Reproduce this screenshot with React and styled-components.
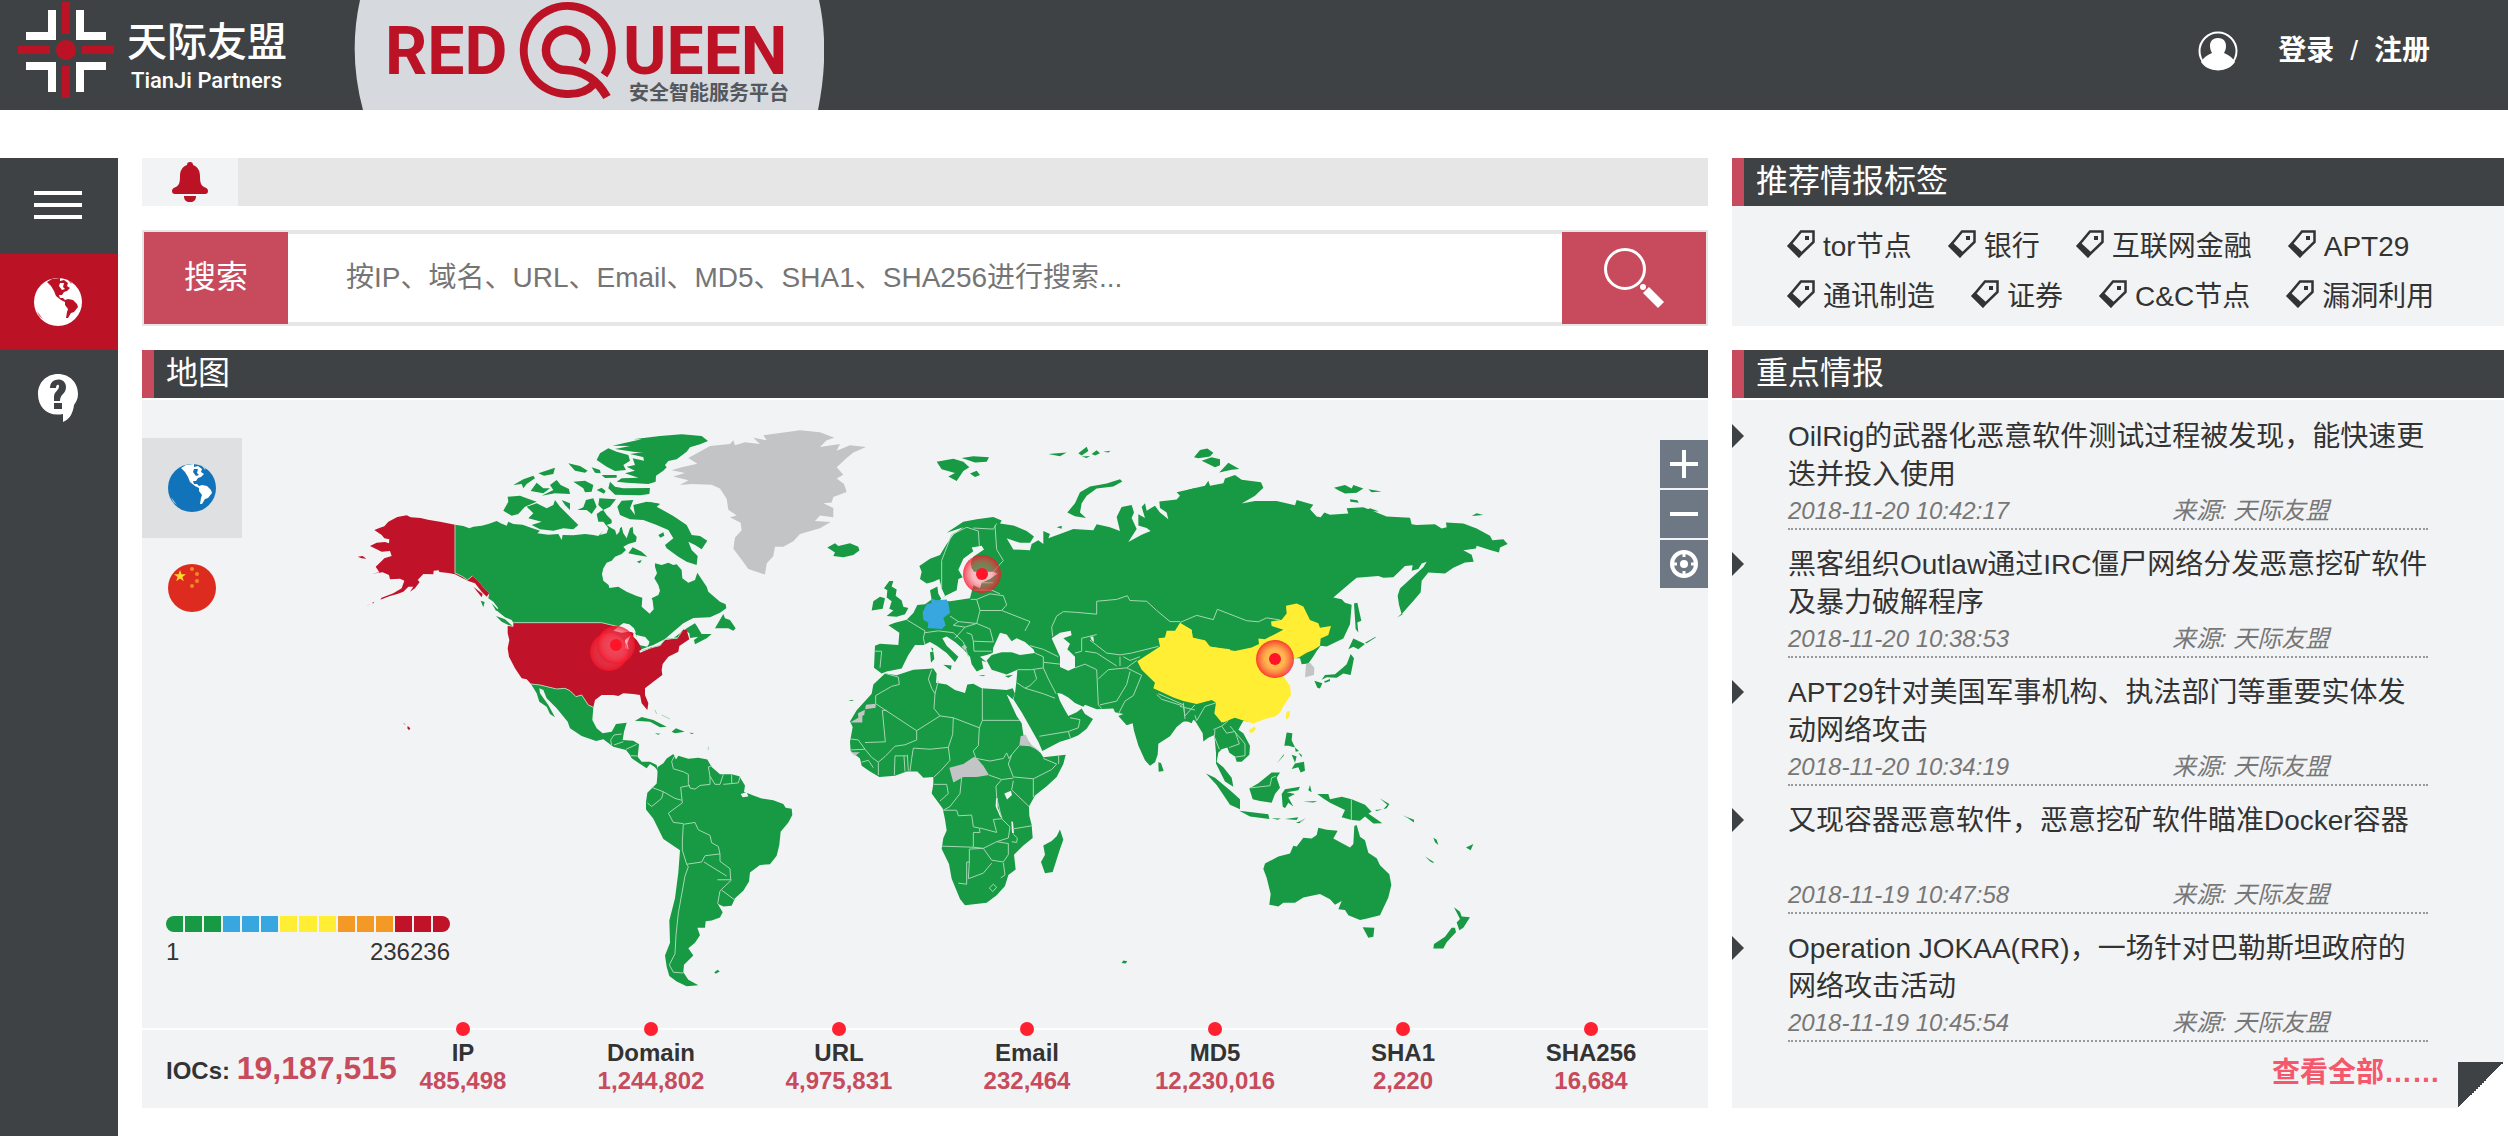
import React from "react";
import styled, { createGlobalStyle } from "styled-components";

const c = {
  dark: "#3f4244",
  red: "#bc1226",
  rose: "#c74b5c",
  panel: "#f2f3f5",
  line: "#e6e6e6",
  green: "#179a43",
  yellow: "#ffee33",
  blue: "#38a7e0",
  orange: "#f29a25",
  grey: "#c3c4c6",
  text: "#333",
  muted: "#777"
};

const GlobalStyle = createGlobalStyle`
  * {
    box-sizing: border-box;
  }
  body {
    margin: 0;
    background: white;
    color: ${c.text};
    font-family: "Liberation Sans", "Noto Sans CJK SC", sans-serif;
    font-size: 28px;
  }
  a {
    color: inherit;
    text-decoration: none;
  }
  button {
    border: 0;
    padding: 0;
    cursor: pointer;
    font: inherit;
  }
`;

const Page = styled.div`
  display: flex;
  flex-direction: column;
  min-height: 100vh;
`;

/* Header */

const StyledHeader = styled.header`
  display: flex;
  align-items: center;
  justify-content: space-between;
  height: 110px;
  padding-right: 78px;
  background-color: ${c.dark};
  color: white;
`;

const Logos = styled.div`
  display: flex;
  height: 110px;
`;

const UserLinks = styled.nav`
  display: flex;
  align-items: center;
  gap: 16px;
  margin-bottom: 8px;
  line-height: 40px;
  a {
    font-weight: bold;
  }
  svg {
    display: block;
    margin-right: 24px;
  }
`;

const CompanyLogo = () => (
  <svg width="354" height="110" role="img" aria-label="天际友盟">
    <g fill="#fff">
      <path d="M48 10h8v30H26v-8h22zM84 10h-8v30h30v-8H84zM48 92h8V62H26v8h22zM84 92h-8V62h30v8H84z" />
    </g>
    <g fill={c.red}>
      <path d="M62 2h8v32h-8zM62 66h8v32h-8zM18 46h32v8H18zM82 46h32v8H82z" />
      <circle cx="66" cy="50" r="10" />
    </g>
    <g fill="#fff">
      <text x="127" y="56" fontSize="40" fontWeight="500" fontFamily="'Noto Sans CJK SC', sans-serif">
        天际友盟
      </text>
      <text x="131" y="88" fontSize="22" fontWeight="500" fontFamily="Roboto, sans-serif">
        TianJi Partners
      </text>
    </g>
  </svg>
);

const ProductLogo = () => (
  <svg width="470" height="110" viewBox="354 0 470 110" role="img" aria-label="RedQueen">
    <path d="M360 0Q348 54 363 110H818Q830 50 819 0z" fill="#d6d9de" />
    <g fill="none" stroke={c.red} strokeWidth="8">
      <path d="M604 75A44 44 0 1 0 566 94Q584 95 594 84" />
      <path d="M582 62A20 20 0 1 0 566 70Q592 71 607 97" strokeWidth="8.5" />
    </g>
    <g fill={c.red} fontFamily="Roboto, sans-serif" fontWeight="700" fontSize="66">
      <text x="385" y="74">
        RED
      </text>
      <text x="623" y="74">
        UEEN
      </text>
    </g>
    <text
      x="629"
      y="100"
      fill="#54585c"
      fontSize="20"
      fontWeight="bold"
      fontFamily="'Noto Sans CJK SC', sans-serif"
    >
      安全智能服务平台
    </text>
  </svg>
);

const Avatar = () => (
  <svg width="40" height="40" viewBox="0 0 40 40" aria-hidden="true">
    <circle cx="20" cy="20" r="18.5" fill="none" stroke="#fff" strokeWidth="2" />
    <path
      d="M20 7c6 0 8 4 8 8 0 3-1 5-2 7 5 2 9 5 11 9-4 6-10 8-17 8S7 37 3 31c2-4 6-7 11-9-1-2-2-4-2-7 0-4 2-8 8-8z"
      fill="#fff"
    />
  </svg>
);

const Header = () => (
  <StyledHeader>
    <Logos>
      <CompanyLogo />
      <ProductLogo />
    </Logos>
    <UserLinks>
      <Avatar />
      <a href="#login">登录</a>
      <span>/</span>
      <a href="#register">注册</a>
    </UserLinks>
  </StyledHeader>
);

/* Sidebar */

const Body = styled.div`
  display: flex;
  flex: 1;
  margin-top: 48px;
`;

const StyledSidebar = styled.nav`
  flex: 0 0 118px;
  background-color: ${c.dark};
`;

const SidebarLink = styled.a`
  display: flex;
  align-items: center;
  justify-content: center;
  height: 96px;
  padding-right: 2px;
  background-color: ${props => (props.$active ? c.red : "transparent")};
`;

const Globe = ({ ocean, land }) => (
  <svg width="48" height="48" viewBox="0 0 48 48" aria-hidden="true">
    <circle cx="24" cy="24" r="24" fill={ocean} />
    <path
      fill={land}
      d="M13 4L18 1 26 0 26 3 30 2 34 5 33 8 36 10 33 13 30 14 28 17 25 17 26 20 29 20 31 22 34 21 39 22 43 26 44 29 40 34 37 35 34 40 32 40 33 34 34 31 31 27 31 24 27 22 22 18 20 13 17 8z"
    />
    <path fill={ocean} d="M26 5l4 0-1 4 2 2-3 1-3-4z" />
    <path fill={land} d="M3 33l3 4 3 4-4-3zM34 2l4 2-1 2z" opacity=".6" />
  </svg>
);

const Sidebar = () => (
  <StyledSidebar>
    <SidebarLink href="#menu" aria-label="菜单">
      <svg width="48" height="48" viewBox="0 0 48 48" fill="#fff">
        <path d="M0 9h48v4H0zM0 21h48v4H0zM0 33h48v4H0z" />
      </svg>
    </SidebarLink>
    <SidebarLink href="#map" aria-label="地图" $active>
      <Globe ocean="#fff" land={c.red} />
    </SidebarLink>
    <SidebarLink href="#help" aria-label="帮助">
      <svg width="42" height="48" viewBox="0 0 42 48">
        <path d="M21 0c12 0 20 9 20 20 0 5-2 8-4 11-1 8-4 14-11 17v-8C11 43 1 34 1 20 1 9 9 0 21 0z" fill="#fff" />
        <path d="M17 27v-4c0-6 5-6 5-11 0-2-3-2-3 2h-6c0-11 16-11 16-1 0 7-6 7-6 14zM17 29h8v6h-8z" fill={c.dark} />
      </svg>
    </SidebarLink>
  </StyledSidebar>
);

/* Columns and panels */

const Main = styled.main`
  display: flex;
  flex: 1;
  align-items: flex-start;
  gap: 24px;
  padding: 0 4px 28px 24px;
`;

const Column = styled.div`
  display: flex;
  flex-direction: column;
  flex: ${props => props.$grow} 1 0;
  gap: 24px;
  min-width: 0;
`;

const PanelTitle = styled.h2`
  height: 48px;
  margin: 0;
  padding-left: 12px;
  border-left: 12px solid ${c.rose};
  background-color: ${c.dark};
  color: white;
  font-size: 32px;
  font-weight: normal;
  line-height: 46px;
`;

const Notice = styled.div`
  height: 48px;
  background-color: ${c.line};
`;

const NoticeIcon = styled.div`
  display: flex;
  align-items: center;
  justify-content: center;
  width: 96px;
  height: 48px;
  background-color: ${c.panel};
`;

const SearchForm = styled.form`
  display: flex;
  height: 96px;
  border: 2px solid ${c.line};
`;

const SearchLabel = styled.label`
  width: 144px;
  background-color: ${c.rose};
  color: white;
  font-size: 32px;
  line-height: 90px;
  text-align: center;
`;

const SearchInput = styled.input`
  flex: 1;
  min-width: 0;
  padding: 0 58px;
  border: 2px solid ${c.line};
  border-width: 2px 0;
  outline: none;
  color: ${c.text};
  font: inherit;
  &::placeholder {
    color: #757575;
    opacity: 1;
  }
`;

const SearchButton = styled.button`
  display: flex;
  align-items: center;
  justify-content: center;
  width: 144px;
  background-color: ${c.rose};
`;

const Search = () => (
  <SearchForm>
    <SearchLabel htmlFor="keyword">搜索</SearchLabel>
    <SearchInput id="keyword" placeholder="按IP、域名、URL、Email、MD5、SHA1、SHA256进行搜索..." />
    <SearchButton type="button" aria-label="搜索">
      <svg width="60" height="60" viewBox="0 0 60 60">
        <circle cx="21" cy="21" r="19.5" fill="none" stroke="#fff" strokeWidth="3" />
        <circle cx="39" cy="39" r="3" fill="#fff" />
        <path d="M39 45l6-6 15 15-6 6z" fill="#fff" />
      </svg>
    </SearchButton>
  </SearchForm>
);

/* Map */

const MapStage = styled.div`
  position: relative;
  margin-top: 2px;
  background-color: ${c.panel};
  > svg {
    display: block;
    width: 100%;
    height: auto;
  }
`;

const RegionTabs = styled.div`
  position: absolute;
  top: 38px;
  left: 0;
`;

const RegionTab = styled.button`
  display: flex;
  align-items: center;
  justify-content: center;
  width: 100px;
  height: 100px;
  background-color: ${props => (props.$active ? "#dfe0e2" : "transparent")};
`;

const ZoomTools = styled.div`
  position: absolute;
  top: 40px;
  right: 0;
  display: flex;
  flex-direction: column;
  gap: 2px;
`;

const ZoomButton = styled.button`
  display: flex;
  align-items: center;
  justify-content: center;
  width: 48px;
  height: 48px;
  background-color: #6e7884;
`;

const Legend = styled.div`
  position: absolute;
  bottom: 62px;
  left: 24px;
  width: 284px;
  font-size: 24px;
`;

const LegendBar = styled.div`
  display: flex;
  gap: 2px;
  height: 16px;
  margin-bottom: 6px;
  overflow: hidden;
  border-radius: 8px;
`;

const LegendCell = styled.span`
  flex: 1;
  background-color: ${props => props.$color};
`;

const LegendRange = styled.div`
  display: flex;
  justify-content: space-between;
  line-height: 28px;
`;

const LAND = {
  northAmerica: {
    origin: "translate(340 410) scale(.33333)",
    green: [
      "M345 344L370 348 388 355 400 350 425 347 445 342 470 333 482 340 500 347 505 335 520 342 548 344 575 354 600 362 592 370 625 374 655 372 665 390 668 375 700 376 735 372 760 375 775 378 790 362 780 375 800 370 805 355 790 335 775 335 770 312 783 303 790 300 800 315 815 330 815 340 800 345 815 355 825 360 830 375 838 365 840 355 845 350 850 370 860 385 870 355 878 350 880 370 890 380 888 395 865 402 850 410 858 420 845 432 825 440 815 452 800 458 790 475 786 493 790 512 806 525 808 534 835 530 860 545 890 558 907 563 905 590 929 611 941 598 938 572 935 565 955 555 960 542 955 525 943 505 951 490 945 470 945 460 965 465 985 458 1000 465 1010 463 1025 480 1027 505 1045 518 1065 510 1072 488 1085 508 1100 530 1105 545 1140 575 1157 583 1159 595 1140 608 1110 622 1060 624 1030 640 1000 665 975 687 940 705 898 720 900 700 925 705 928 695 915 680 890 680 885 668 875 655 865 645 850 640 835 650 785 638 520 638 515 630 495 622 468 600 475 595 460 575 445 565 448 550 432 535 412 510 397 498 382 510 368 500 345 489Z",
      "M1125 655L1150 612 1155 625 1170 630 1187 655 1180 662 1165 655 1145 655Z",
      "M975 687L1000 685 1040 655 1065 640 1072 650 1085 672 1115 672 1100 685 1065 703 1062 690 1075 680 1050 684 1048 670 1030 658 1015 682Z",
      "M468 618L495 628 518 648 505 645 485 635ZM422 572L434 576 430 592ZM455 580L475 600 468 602Z",
      "M818 107L850 100 905 88 880 88 960 78 1025 73 1085 78 1104 93 1080 103 1050 112 1040 125 1010 148 985 153 975 165 980 172 970 182 948 197 947 215 925 222 860 218 830 215 845 205 895 203 855 190 885 182 860 170 885 165 878 145 912 152 910 140 925 130 880 125 825 117 870 108Z",
      "M780 130L805 115 830 125 865 135 870 152 850 165 858 180 825 183 800 170 770 150ZM870 132L930 124 960 128 912 142Z",
      "M810 215L825 230 850 235 930 234 928 252 900 256 825 254 805 235Z",
      "M755 172L780 180 782 190 765 188ZM785 195L830 195 830 203 795 204ZM685 160L720 168 743 182 735 188 705 182Z",
      "M520 225L550 208 580 197 585 205 560 222 550 235 545 222ZM595 190L645 173 640 192 612 197ZM572 243L590 218 610 235 630 235 610 250Z",
      "M630 225L650 210 662 225 687 237 690 252 645 250 605 257 640 240ZM700 215L735 212 760 225 755 245 735 247 730 235ZM770 240L785 233 797 243 792 251Z",
      "M490 302L505 275 503 260 540 257 560 265 590 275 555 290 535 312 515 317Z",
      "M560 290L590 280 620 295 640 285 645 270 660 290 690 320 715 345 700 358 670 355 640 362 600 358 575 345 605 335 565 325 580 310ZM665 270L690 280 690 300 675 285Z",
      "M712 300L730 292 738 270 760 265 770 290 755 312 740 300ZM778 265L828 268 810 290 790 300 775 285Z",
      "M832 290L845 272 880 270 870 295 885 315 880 285 920 275 960 283 950 290 1000 318 1040 345 1055 375 1080 378 1102 392 1085 418 1065 405 1045 395 1055 420 1073 438 1070 465 1040 455 1015 440 980 415 975 405 1000 385 985 360 950 345 910 330 870 328 840 315Z",
      "M865 430L878 412 905 425 922 440 890 435ZM955 375L970 367 973 377 961 383ZM925 275L960 281 940 287ZM890 455L905 450 900 460Z",
      "M573 822L600 825 650 837 675 835 690 842 708 860 725 855 745 885 760 892 757 930 770 955 788 970 815 965 828 942 860 938 852 965 848 990 880 992 897 1003 893 1040 905 1055 930 1055 950 1065 955 1085 945 1072 930 1062 920 1075 905 1065 875 1045 870 1035 858 1020 820 1010 790 988 768 993 725 978 690 955 683 935 650 895 620 865 610 840 598 835 600 850 625 885 645 922 630 912 620 890 598 875 590 850Z",
      "M885 932L905 921 940 930 980 950 960 952 930 935ZM995 965L1008 955 1034 965 1005 970ZM945 970L962 971 954 974ZM1048 968L1063 969 1055 972Z"
    ],
    red: [
      "M103 360L118 354 133 349 145 335 172 321 200 316 212 322 242 324 264 329 300 335 345 344 345 489 352 492 368 500 382 510 397 498 412 510 432 535 448 550 440 560 425 545 405 520 385 513 368 505 345 493 325 489 298 486 296 481 281 482 280 493 250 492 233 510 239 516 225 535 210 545 220 530 205 530 190 545 172 552 150 558 121 569 125 563 160 550 185 535 193 512 180 506 150 508 147 495 128 487 96 491 118 487 107 470 125 453 133 445 155 438 150 423 125 425 90 408 110 398 135 396 147 400 148 388 133 385 125 375Z",
      "M53 440L68 438 79 446 65 445ZM80 587L92 581 84 586ZM97 578L103 575 99 581ZM203 948L211 955 207 961 202 955ZM188 940L194 941 198 945ZM400 530L428 552 425 562Z",
      "M503 648L520 650 520 638 785 638 835 650 850 655 880 668 880 680 890 690 900 705 905 722 935 712 960 708 975 690 1010 685 1028 660 1040 660 1048 688 1018 708 1015 725 985 740 968 762 965 780 967 795 940 815 915 835 915 855 925 880 922 900 905 880 900 855 880 852 850 850 835 858 820 855 785 855 765 870 760 892 745 885 725 855 708 860 690 842 675 835 650 837 600 825 573 822 560 808 545 805 525 775 507 740 503 715 508 690 503 670Z"
    ],
    water: [
      "M820 662L835 650 852 640 868 643 882 655 888 668 865 665 845 668Z",
      "M855 690L872 676 862 700 866 718 855 715Z",
      "M888 674L910 680 928 695 922 710 900 706 895 690ZM898 722L935 708 925 718 900 728Z"
    ],
    borders:
      "M345 344V489L352 492 368 500 382 510 397 498M520 638H785L835 650M905 722L960 706 975 687 1012 685 1028 660M573 822L600 825 650 837 675 835 690 842 708 860 725 855 745 885 760 892M815 1005L812 990 822 975 845 972M858 1018L890 1003M822 1005L850 995M873 1037L892 1038M945 900L950 912M965 915L990 927M1105 1010V1020"
  },
  atlantic: {
    origin: "translate(620 410) scale(.33333 .3699)",
    green: [
      "M112 990L113 965 130 955 140 942 160 930 168 945 175 935 205 943 235 940 262 945 275 965 300 985 335 985 358 990 375 1015 372 1032 400 1042 425 1050 460 1055 490 1065 497 1075 515 1078 517 1095 505 1115 482 1140 478 1175 470 1205 450 1228 420 1230 390 1250 387 1275 370 1300 345 1320 335 1340 310 1342 293 1335 308 1358 300 1372 275 1380 257 1382 255 1400 232 1400 240 1420 225 1440 205 1455 220 1475 192 1500 190 1520 205 1540 235 1555 200 1558 170 1545 148 1530 140 1505 135 1475 150 1440 148 1380 165 1320 175 1250 180 1190 130 1160 100 1105 78 1080 78 1060 82 1035 110 1010Z",
      "M283 1520L293 1513 299 1518 287 1524Z",
      "M622 372L645 360 655 368 690 360 715 370 718 380 700 392 670 398 640 395 645 385Z",
      "M950 140L1000 132 1030 140 1048 155 1030 165 1010 192 985 180 1005 170 965 160ZM1025 130L1060 125 1107 128 1100 140 1065 142ZM1050 172L1070 164 1080 176 1065 181Z"
    ],
    grey: [
      "M155 163L185 155 232 145 205 130 235 115 270 97 330 92 340 82 345 95 375 87 420 92 400 75 440 82 430 68 480 62 540 55 600 60 643 75 620 82 600 100 660 92 650 110 690 95 738 100 700 115 680 130 650 155 670 175 650 185 672 200 680 222 640 235 635 250 610 252 640 265 640 290 600 285 585 300 632 303 600 320 540 335 520 355 490 370 465 370 460 395 440 415 435 445 385 430 365 405 340 375 345 345 365 325 362 305 330 290 350 285 325 270 320 240 300 212 275 202 215 200 180 203 205 190 160 180 195 170Z"
    ],
    water: ["M362 1038L380 1033 385 1045 368 1047Z"],
    borders:
      "M165 933L155 950 160 970 190 978 205 985 205 1010 210 1022 225 1025 240 1015 270 1012 270 990 265 965 275 962M270 990L285 1012 300 1012 310 985M310 1012L335 1010 335 985M335 1010L355 1008 360 992M210 1015L182 1020 187 1062 145 1090 160 1115 190 1118M95 1020L130 1032 125 1050 95 1072 82 1062M130 1032L165 1050 185 1055M190 1120L225 1115 235 1135 270 1150 275 1170 295 1180 300 1200M190 1120L187 1165 187 1190 200 1228 245 1222 255 1205 300 1200 300 1220 330 1240 332 1270 292 1270M252 1222L320 1260M200 1228L205 1235 195 1260 185 1310 175 1360 168 1420 165 1470 148 1500 160 1520 190 1522M293 1335L300 1300 335 1270M305 1298L345 1325"
  },
  oldWorld: {
    origin: "translate(830 420) scale(.33333 .3699)",
    green: [
      "M268 395L300 375 330 365 350 335 370 310 400 290 350 305 400 275 440 268 490 262 515 272 510 280 550 285 590 300 612 315 600 332 570 332 530 320 550 350 600 352 605 335 625 325 640 335 640 300 660 308 655 320 700 305 730 295 790 298 800 282 840 290 870 300 860 262 875 235 905 230 912 250 905 265 920 295 895 330 935 310 962 300 950 292 925 285 925 255 945 265 935 235 945 225 950 245 975 232 990 250 1015 268 1010 250 990 238 988 220 1040 215 1050 205 1040 195 1100 183 1100 815 1090 810 1085 820 1065 812 1040 830 1020 855 985 875 983 905 975 925 960 935 945 920 925 880 912 840 908 820 890 825 865 800 880 795 855 790 850 780 800 782 765 770 760 775 735 765 715 750 695 740 682 738 690 760 705 785 715 800 740 790 755 780 765 795 789 808 770 835 745 852 720 862 690 870 637 895 625 870 600 830 575 790 550 755 555 740 560 700 562 675 530 688 485 675 470 650 485 635 515 628 545 628 570 635 615 630 610 620 585 600 560 590 545 598 530 580 510 575 490 615 488 630 470 635 450 640 470 655 455 650 460 672 440 680 425 660 420 640 400 620 375 600 350 585 337 590 350 610 385 640 375 655 350 630 320 610 300 600 280 608 255 608 235 635 215 672 170 680 155 685 132 670 135 610 150 605 205 608 208 575 175 555 195 548 230 540 250 522 262 500 285 498 305 485 300 460 322 450 325 470 335 485 345 475 335 455 328 430 310 437 290 442 270 430 275 410Z",
      "M170 530L190 515 178 510 185 490 170 480 172 460 162 455 178 435 190 435 185 450 200 458 197 475 215 488 220 505 235 508 225 525 200 532ZM125 515L130 490 150 478 165 482 158 510Z",
      "M300 628L310 626 313 646 303 656ZM303 615L310 618 308 626ZM340 662L365 664 362 676ZM445 690L467 690 459 693ZM525 692L550 689 535 697ZM55 757L72 757 65 760Z",
      "M712 250L735 225 750 195 780 180 830 172 870 160 877 166 850 180 800 185 770 205 755 225 750 250 768 265 735 260Z",
      "M655 92L710 88 690 98ZM745 90L770 72 775 84 755 96ZM785 92L800 82 810 90 795 96ZM820 86L842 83 835 88ZM755 99L780 97 770 103ZM680 290L695 286 695 294ZM985 925L993 927 1001 949 986 951Z",
      "M165 685L200 690 250 675 310 672 320 685 318 710 350 715 375 730 405 738 412 715 430 713 455 725 500 728 530 730 548 725 555 740 548 755 535 745 530 742 560 800 575 820 580 850 605 880 632 900 640 912 707 905 700 930 680 965 650 990 615 1015 597 1045 598 1070 605 1095 608 1130 580 1150 552 1175 557 1215 535 1230 525 1260 500 1285 470 1305 405 1312 390 1295 365 1240 357 1200 335 1160 340 1130 350 1110 345 1080 338 1050 305 1010 310 985 310 965 280 967 262 950 230 950 195 962 148 965 120 950 95 935 90 915 62 895 60 870 68 830 60 815 80 785 125 740 130 715Z",
      "M690 1107L700 1135 690 1160 668 1222 645 1225 633 1195 645 1175 640 1150 665 1138 680 1125ZM875 1468L880 1461 892 1463 887 1469Z"
    ],
    grey: [
      "M60 818L85 805 84 793 105 783 108 770 137 767 137 778 105 782 103 797 97 800 97 818Z",
      "M358 940L400 930 430 912 438 912 460 935 477 960 440 965 400 965 370 980Z",
      "M568 880L572 855 587 850 600 875 632 897 600 882ZM62 898L90 898 75 908ZM395 612L405 607 411 615 405 623Z"
    ],
    water: [
      "M328 488L345 476 380 460 385 430 398 425 385 405 400 375 430 355 425 345 455 340 462 350 430 370 422 385 425 400 432 410 490 410 503 415 480 430 455 440 450 455 430 447 420 482 360 490Z",
      "M665 590L690 575 722 570 725 582 700 590 720 605 712 620 735 640 735 670 715 678 690 668 690 640 675 610Z",
      "M523 1010L543 1002 546 1014 531 1026ZM498 1022L503 1022 503 1048 518 1077 510 1072 497 1045ZM544 1085L549 1087 552 1118 546 1116ZM780 585L790 585 792 600 785 595Z"
    ],
    blue: [
      "M278 520L290 498 305 495 303 482 318 487 350 485 355 495 360 522 340 535 347 555 335 565 293 562 295 548 280 540Z"
    ],
    yellow: [
      "M922 652L990 612 985 590 1005 588 1010 570 1035 570 1050 548 1085 568 1088 588 1130 600 1135 612 1200 620 1200 810 1180 818 1155 795 1160 765 1145 757 1100 768 1060 760 1030 750 970 725 975 710 935 675Z"
    ],
    borders:
      "M165 685L205 695 208 715 185 720 137 745 137 767M137 767L260 840 330 800 312 780 315 740 305 725 295 700 305 675M315 740L325 705M157 785L166 870 105 872M157 785H170M260 840L260 865 225 878 195 882 165 910M330 800L370 805 448 832M457 725V812H570M457 812L448 832 445 880 430 895 438 915M370 805L368 850 355 885 300 890 250 887 245 915 240 950M355 885L360 920 330 950 312 965M60 862L85 865 105 890 62 892M105 890L125 912 145 925 165 910M195 908L193 960M195 908H230M222 908L225 950M232 905L235 948M145 925V960M95 925L115 920 130 940M440 915L480 922 520 915 530 900 537 915 545 905 568 880M545 905L535 930 550 965 610 970 665 945 680 930 640 915M686 906V930M477 960L515 972 550 968M610 970V1020M515 972L498 990 500 1020 515 1078M550 975L545 1000 597 1045M312 985H350L355 1010 330 1030M395 965L390 1010 360 1045 340 1055 380 1055 385 1070 425 1068 430 1100 448 1103 450 1115 430 1115 430 1155 335 1152M430 1155L460 1158 500 1140 535 1130 540 1100 515 1078 490 1080 500 1115 450 1103M460 1158L485 1190 520 1195 535 1175 535 1145 500 1140M460 1158L418 1160 418 1195 410 1195 410 1255 385 1252M418 1195L415 1240 460 1225 485 1198M520 1197L525 1230 512 1238M478 1265L490 1255 500 1263 488 1275ZM552 1105L605 1097M550 1120L562 1130 560 1142 545 1140M562 675L605 675 640 670 640 655M560 710L585 725 600 718 620 700 612 675M585 725L640 740 675 752M640 670L655 700 678 740M628 855L715 842 722 862M715 842L745 832 750 810 720 805M735 670L765 660 800 675 805 770 815 780M805 700L835 675 890 670 920 650M810 770L860 760 890 715 900 680M890 670L935 690 910 745 885 760 865 795M985 740L1060 770 1065 800 1095 770M980 742L995 755 1055 772M665 560L680 530 700 518 740 520 800 525 800 490 860 485 892 475 900 488 950 490 980 515 1020 545 1050 545M665 560L668 585M755 590L755 625 735 630M755 590L800 580M780 595L830 630 870 635 905 630 985 612M870 640V665M880 640L900 650 930 640M765 625L800 630 860 665M410 290L445 300 448 340M410 290L365 310 335 380 335 455M430 292L490 295 500 280M495 285L500 350 520 380 490 410M422 485L440 485 450 515 440 550 385 545 360 530M440 485L480 470 520 475 530 500 515 515 450 515M515 515L600 545 585 570M440 550L480 565 490 600 430 598M385 545L370 555M285 575L325 570 370 575M230 540L285 570 280 590 285 608M155 625L150 670M135 625H155M370 555L405 560 440 550M370 575L400 600 415 640M405 560L375 590M430 598L425 580 410 575M430 598L432 625 485 625M600 610L640 620 685 640M615 630L640 640 640 655 690 660M455 440H490M430 460L485 460 510 470"
  },
  pacific: {
    origin: "translate(1180 410) scale(.33333 .35714)",
    green: [
      "M0 232L30 222 75 212 85 198 90 212 130 205 135 192 165 182 185 195 243 202 250 218 225 240 185 262 225 255 290 255 345 267 350 252 400 265 390 278 410 298 422 300 433 287 450 293 505 290 500 275 550 272 620 298 690 302 695 320 710 322 765 320 785 332 800 328 798 315 850 318 890 332 930 352 937 365 970 362 983 375 960 385 957 399 930 392 890 380 888 388 850 393 875 405 881 425 855 427 820 442 795 458 745 455 725 478 722 510 700 535 685 550 665 572 657 545 653 520 660 500 695 470 730 440 740 425 725 430 715 445 695 450 698 435 675 437 640 468 610 470 595 465 530 470 510 485 460 525 485 530 495 540 515 545 510 600 490 640 440 662 422 660 410 675 400 690 385 710 365 712 360 695 345 695 300 690 300 740 300 840 220 875 190 870 175 895 190 905 210 940 208 965 185 985 170 985 165 970 148 960 142 945 125 950 115 960 110 985 130 1000 155 1030 160 1055 135 1040 108 990 108 960 103 910 85 918 70 928 68 905 45 870 30 860 25 872 0 872Z",
      "M522 542L532 540 544 590 532 595 535 623 527 613ZM505 670L520 640 555 655 535 670 520 663ZM512 683L522 695 512 742 490 738 470 750 440 748 425 755 435 742 465 740 490 720 500 712ZM403 758L427 765 420 780 412 778ZM432 760L450 753 450 759 435 764ZM555 652L587 635 587 637 560 653ZM652 581L665 570 668 572Z",
      "M462 218L495 210 515 220 520 210 550 220 530 232 495 234 475 225ZM565 222L605 228 575 230ZM510 250L532 253 536 260 511 257ZM555 282L570 275 598 284ZM875 297L890 289 910 294Z",
      "M42 132L60 112 82 108 100 120 90 130 55 135ZM65 142L95 132 120 138 120 155 105 160ZM118 175L145 148 178 165 155 167Z",
      "M313 940L320 903 337 905 335 925 345 945 325 940ZM335 965L350 970 345 988ZM345 945L357 955 347 957ZM355 960L365 965 365 973ZM335 1005L345 990 372 985 375 1010 362 1015 355 1000ZM290 990L312 963 311 968Z",
      "M78 1018L105 1030 150 1065 180 1090 180 1118 150 1105 110 1050ZM178 1122L265 1132 268 1145 210 1138ZM208 1060L235 1045 275 1015 300 1015 290 1030 300 1058 285 1075 275 1100 240 1095 218 1090Z",
      "M305 1075L315 1062 360 1055 355 1065 320 1070 345 1075 325 1085 340 1110 325 1100 315 1115 308 1110ZM275 1143L303 1144 293 1147ZM315 1145L355 1140 350 1148ZM348 1156L373 1146 358 1157ZM385 1065L390 1050 395 1070ZM370 1097L412 1095 400 1099Z",
      "M412 1075L445 1075 450 1090 485 1083 515 1090 555 1105 575 1125 565 1130 607 1157 580 1158 555 1138 540 1150 515 1148 485 1140 495 1120 450 1100 430 1088ZM585 1120L610 1118 622 1105 600 1088 628 1103 620 1115 590 1123Z",
      "M250 1285L255 1270 295 1250 330 1242 340 1220 350 1222 370 1198 395 1200 410 1190 415 1170 440 1175 473 1178 460 1200 510 1225 520 1215 523 1165 530 1162 540 1195 555 1205 565 1240 590 1255 600 1275 628 1300 634 1330 625 1365 600 1415 555 1425 540 1428 505 1415 495 1400 475 1398 485 1375 465 1385 450 1370 420 1355 370 1365 345 1380 310 1380 295 1390 268 1385 272 1355 260 1310ZM548 1448L583 1450 580 1475 565 1478Z",
      "M822 1392L840 1405 845 1418 870 1420 850 1450 838 1457 830 1435 840 1425ZM825 1450L828 1462 800 1490 790 1508 760 1508 762 1495 795 1475 815 1450ZM667 1135L702 1147 702 1155 682 1142ZM760 1198L770 1203 775 1218 765 1210ZM735 1250L760 1265 762 1269 752 1265ZM858 1225L880 1215 872 1233Z"
    ],
    grey: ["M375 748L378 712 390 708 403 722 402 742ZM355 1153L378 1142 368 1152Z"],
    yellow: [
      "M0 597L35 615 38 638 75 645 90 662 165 675 215 665 237 655 235 640 255 642 300 620 310 615 275 605 273 592 305 587 320 570 318 548 350 542 370 550 390 588 415 597 420 610 453 605 445 630 422 640 420 660 400 672 380 680 358 692 330 700 342 710 330 720 315 730 312 748 330 772 333 797 310 830 300 848 285 858 255 865 220 878 185 868 165 862 140 870 125 875 103 850 108 820 100 810 50 822 0 800Z",
      "M320 845L330 843 328 858 321 868 317 860ZM208 895L223 887 228 892 220 902 208 904Z"
    ],
    water: ["M300 712L322 690 335 686 338 696 328 702 340 708 325 722 310 722Z"],
    borders:
      "M0 595L50 575 100 587 112 558 145 570 200 590 235 593 260 582 300 588M100 895L125 885 145 870M125 885L140 905 165 900 178 935 148 945M150 885L195 935 195 968 165 972M105 895L103 915 118 950M45 855L50 870 75 830 108 820M10 820L15 865M0 830L45 840M212 1058L270 1052 275 1030 288 1025M514 1090V1148"
  }
};

const TONES = ["green", "red", "grey", "water", "blue", "yellow"];
const FILLS = {
  green: c.green,
  red: "#c01228",
  grey: c.grey,
  water: c.panel,
  blue: c.blue,
  yellow: c.yellow
};

const Marker = ({ x, y, dot = 1 }) => (
  <g>
    <circle cx={x} cy={y} r="19" fill="url(#pulse)" />
    <circle cx={x} cy={y} r="6" fill="#ff1428" opacity={dot} />
  </g>
);

const WorldMap = () => (
  <svg viewBox="142 400 1566 628" role="img" aria-label="世界地图">
    <defs>
      <radialGradient id="pulse">
        <stop offset="0" stopColor="#ff8090" stopOpacity=".4" />
        <stop offset=".5" stopColor="#ff6070" stopOpacity=".4" />
        <stop offset="1" stopColor="#f51428" stopOpacity=".8" />
      </radialGradient>
    </defs>
    {TONES.map(tone =>
      Object.entries(LAND).map(([name, land]) => (
        <g key={name + tone} transform={land.origin} fill={FILLS[tone]}>
          {(land[tone] || []).map(d => (
            <path key={d} d={d} />
          ))}
        </g>
      ))
    )}
    {Object.entries(LAND).map(([name, land]) => (
      <g key={name} transform={land.origin}>
        <path d={land.borders} fill="none" stroke="#a5d6b4" vectorEffect="non-scaling-stroke" />
      </g>
    ))}
    <Marker x={609} y={652} dot={0.3} />
    <Marker x={616} y={645} />
    <Marker x={982} y={574} />
    <Marker x={1275} y={659} />
  </svg>
);

const ChinaFlag = () => (
  <svg width="48" height="48" viewBox="0 0 48 48" aria-hidden="true">
    <circle cx="24" cy="24" r="24" fill="#de2b1f" />
    <path d="M12 6l1.500 4.200h4.500l-3.600 2.700 1.400 4.300-3.800-2.600-3.800 2.600 1.400-4.300L6 10.200h4.500z" fill="#ffd92e" />
    <g fill="#f08a24">
      <circle cx="24" cy="5" r="2" />
      <circle cx="29" cy="10" r="2" />
      <circle cx="29" cy="17" r="2" />
      <circle cx="24" cy="22" r="2" />
    </g>
  </svg>
);

const MapPanel = () => (
  <section>
    <PanelTitle>地图</PanelTitle>
    <MapStage>
      <WorldMap />
      <RegionTabs>
        <RegionTab aria-label="全球" $active>
          <Globe ocean="#1173b9" land="#fff" />
        </RegionTab>
        <RegionTab aria-label="中国">
          <ChinaFlag />
        </RegionTab>
      </RegionTabs>
      <ZoomTools>
        <ZoomButton aria-label="放大">
          <svg width="28" height="28" fill="#fff">
            <path d="M0 12h12V0h4v12h12v4H16v12h-4V16H0z" />
          </svg>
        </ZoomButton>
        <ZoomButton aria-label="缩小">
          <svg width="28" height="28" fill="#fff">
            <path d="M0 12h28v4H0z" />
          </svg>
        </ZoomButton>
        <ZoomButton aria-label="重置">
          <svg width="28" height="28" fill="none" stroke="#fff">
            <circle cx="14" cy="14" r="12" strokeWidth="4" />
            <circle cx="14" cy="14" r="4" fill="#fff" stroke="none" />
            <path d="M14 3v4M14 21v4M3 14h4M21 14h4" strokeWidth="3" />
          </svg>
        </ZoomButton>
      </ZoomTools>
      <Legend>
        <LegendBar>
          {[c.green, c.blue, c.yellow, c.orange, "#c01228"].map(color =>
            [0, 1, 2].map(i => <LegendCell key={color + i} $color={color} />)
          )}
        </LegendBar>
        <LegendRange>
          <span>1</span>
          <span>236236</span>
        </LegendRange>
      </Legend>
    </MapStage>
    <Stats />
  </section>
);

/* Counters under the map */

const StyledStats = styled.div`
  display: flex;
  height: 80px;
  padding-right: 23px;
  border-top: 2px solid white;
  background-color: ${c.panel};
  font-size: 24px;
  font-weight: bold;
`;

const Total = styled.div`
  width: 227px;
  padding-left: 24px;
  line-height: 76px;
  white-space: nowrap;
  strong {
    color: ${c.rose};
    font-size: 32px;
  }
`;

const Counter = styled.div`
  position: relative;
  flex: 1;
  padding-top: 9px;
  line-height: 28px;
  text-align: center;
  &::before {
    content: "";
    position: absolute;
    top: -8px;
    left: calc(50% - 7px);
    width: 14px;
    height: 14px;
    border-radius: 50%;
    background-color: #ff2030;
  }
`;

const CounterValue = styled.div`
  color: ${c.rose};
`;

const COUNTERS = [
  ["IP", "485,498"],
  ["Domain", "1,244,802"],
  ["URL", "4,975,831"],
  ["Email", "232,464"],
  ["MD5", "12,230,016"],
  ["SHA1", "2,220"],
  ["SHA256", "16,684"]
];

const Stats = () => (
  <StyledStats>
    <Total>
      IOCs: <strong>19,187,515</strong>
    </Total>
    {COUNTERS.map(([name, value]) => (
      <Counter key={name}>
        {name}
        <CounterValue>{value}</CounterValue>
      </Counter>
    ))}
  </StyledStats>
);

/* Tags */

const TagBox = styled.div`
  display: flex;
  flex-direction: column;
  height: 120px;
  padding: 16px 54px 0 55px;
  background-color: ${c.panel};
`;

const TagRow = styled.div`
  display: flex;
  gap: 36px;
  line-height: 50px;
  white-space: nowrap;
`;

const Tag = styled.a`
  display: flex;
  gap: 8px;
  svg {
    margin-top: 8px;
  }
`;

const TagIcon = () => (
  <svg width="28" height="28" viewBox="0 0 28 28" aria-hidden="true">
    <path d="M14 1.500H26.500V12L12 26 2 16z" fill="none" stroke={c.text} strokeWidth="2.500" />
    <path d="M4 12L0 16 12 28 16 23z" fill={c.text} />
    <path d="M18 6h4v4h-4z" fill={c.text} />
  </svg>
);

const TAGS = [["tor节点", "银行", "互联网金融", "APT29"], ["通讯制造", "证券", "C&C节点", "漏洞利用"]];

const TagPanel = () => (
  <section>
    <PanelTitle>推荐情报标签</PanelTitle>
    <TagBox>
      {TAGS.map(row => (
        <TagRow key={row[0]}>
          {row.map(tag => (
            <Tag key={tag} href="#tag">
              <TagIcon />
              {tag}
            </Tag>
          ))}
        </TagRow>
      ))}
    </TagBox>
  </section>
);

/* News */

const NewsBox = styled.div`
  position: relative;
  height: 708px;
  margin-top: 2px;
  padding-top: 18px;
  background-color: ${c.panel};
  &::after {
    content: "";
    position: absolute;
    right: 0;
    bottom: 0;
    width: 46px;
    height: 46px;
    background: linear-gradient(135deg, ${c.dark} 50%, white 50%);
  }
`;

const NewsList = styled.ul`
  margin: 0;
  padding: 0;
  list-style: none;
`;

const NewsItem = styled.li`
  display: flex;
  margin-bottom: 16px;
  &::before {
    content: "";
    flex: none;
    width: 12px;
    height: 24px;
    margin: 6px 44px 0 0;
    background-color: ${c.dark};
    clip-path: polygon(0 0, 100% 50%, 0 100%);
  }
`;

const NewsText = styled.div`
  flex: 1;
  margin-right: 76px;
  border-bottom: 2px dotted #999;
`;

const NewsTitle = styled.a`
  display: block;
  min-height: 76px;
  line-height: 38px;
`;

const NewsMeta = styled.div`
  display: grid;
  grid-template-columns: 3fr 2fr;
  color: ${c.muted};
  font-size: 24px;
  font-style: italic;
  line-height: 34px;
`;

const MoreLink = styled.a`
  display: block;
  margin-right: 64px;
  color: #f5586c;
  font-weight: bold;
  line-height: 30px;
  text-align: right;
`;

const NEWS = [
  ["OilRig的武器化恶意软件测试过程被发现，能快速更迭并投入使用", "2018-11-20 10:42:17"],
  ["黑客组织Outlaw通过IRC僵尸网络分发恶意挖矿软件及暴力破解程序", "2018-11-20 10:38:53"],
  ["APT29针对美国军事机构、执法部门等重要实体发动网络攻击", "2018-11-20 10:34:19"],
  ["又现容器恶意软件，恶意挖矿软件瞄准Docker容器", "2018-11-19 10:47:58"],
  ["Operation JOKAA(RR)，一场针对巴勒斯坦政府的网络攻击活动", "2018-11-19 10:45:54"]
];

const NewsPanel = () => (
  <section>
    <PanelTitle>重点情报</PanelTitle>
    <NewsBox>
      <NewsList>
        {NEWS.map(([title, date]) => (
          <NewsItem key={date}>
            <NewsText>
              <NewsTitle href="#news">{title}</NewsTitle>
              <NewsMeta>
                <span>{date}</span>
                <span>来源: 天际友盟</span>
              </NewsMeta>
            </NewsText>
          </NewsItem>
        ))}
      </NewsList>
      <MoreLink href="#all">查看全部……</MoreLink>
    </NewsBox>
  </section>
);

const App = () => (
  <Page>
    <GlobalStyle />
    <Header />
    <Body>
      <Sidebar />
      <Main>
        <Column $grow={1566}>
          <Notice>
            <NoticeIcon>
              <svg width="36" height="40" viewBox="0 0 36 40" fill={c.red}>
                <path d="M18 0c2 0 3 1 3 3 5 2 7 6 7 11 0 7 1 9 4 11 3 1 4 2 4 4 0 2-1 3-3 3H3c-2 0-3-1-3-3 0-2 1-3 4-4 3-2 4-4 4-11C8 9 10 5 15 3c0-2 1-3 3-3zM12 34h12c0 4-2 6-6 6s-6-2-6-6z" />
              </svg>
            </NoticeIcon>
          </Notice>
          <Search />
          <MapPanel />
        </Column>
        <Column $grow={772}>
          <TagPanel />
          <NewsPanel />
        </Column>
      </Main>
    </Body>
  </Page>
);

export default App;
